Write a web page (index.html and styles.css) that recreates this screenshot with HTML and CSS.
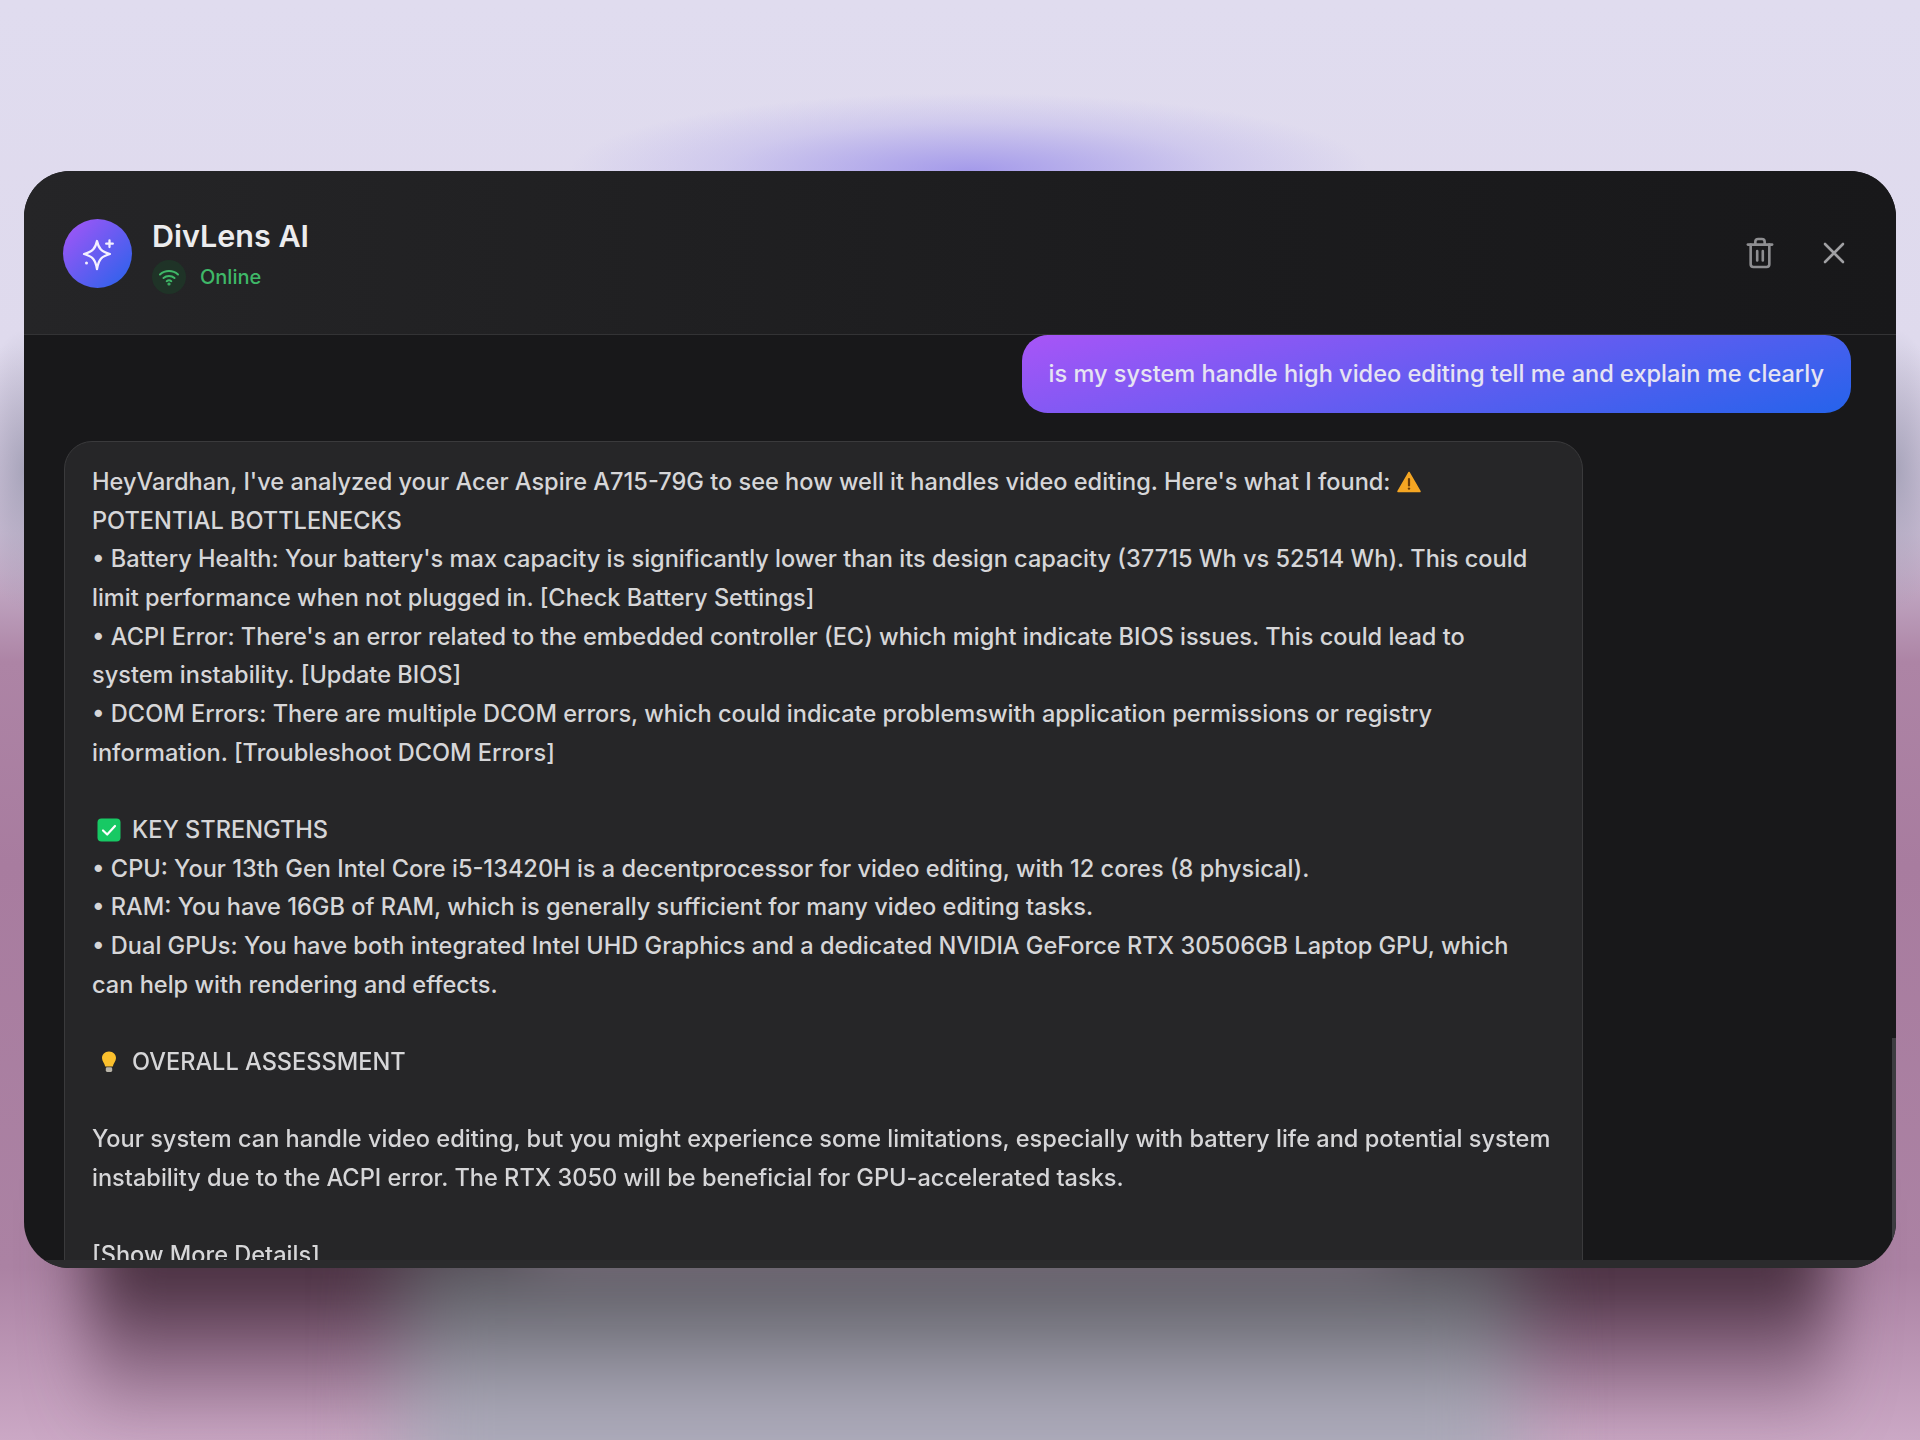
FILE: index.html
```html
<!DOCTYPE html>
<html>
  <head>
    <meta http-equiv="Content-Type" content="text/html;charset=utf-8" />
    <title>DivLens AI</title>
    <link rel="stylesheet" href="styles.css">
  </head>
  <body>
    <div class="backdrop">
      <div class="glow"></div>
      <div class="side-shade side-left"></div>
      <div class="side-shade side-right"></div>
      <div class="under-shade"></div>
    </div>
    <div class="panel">
      <div class="header">
        <div class="brand">
          <div class="avatar">
            <svg viewBox="0 0 36 36" width="36" height="36" fill="none" stroke="#f4f0ff" stroke-width="2.3" stroke-linejoin="round" stroke-linecap="round">
              <path d="M17 5C18.6 12.5 21.5 15.7 30 18C21.5 20.3 18.6 23.5 17 33C15.4 23.5 12.5 20.3 4 18C12.5 15.7 15.4 12.5 17 5z"/>
              <path d="M29.5 4.5v6.5M26.2 7.7h6.6"/>
              <circle cx="6.5" cy="27" r="1.5" fill="#f4f0ff" stroke="none"/>
            </svg>
          </div>
          <div class="brand-text">
            <div class="brand-name">DivLens AI</div>
            <div class="status">
              <span class="status-icon">
                <svg viewBox="0 0 24 24" width="24" height="24" fill="none" stroke="#3fb868" stroke-width="2" stroke-linecap="round">
                  <path d="M3 9.5c5-4.6 13-4.6 18 0"/>
                  <path d="M6.5 13c3-2.7 8-2.7 11 0"/>
                  <path d="M9.7 16.2c1.3-1.1 3.3-1.1 4.6 0"/>
                  <circle cx="12" cy="19" r="0.6" fill="#3fb868"/>
                </svg>
              </span>
              <span>Online</span>
            </div>
          </div>
        </div>
        <div class="actions">
          <svg viewBox="0 0 30 34" width="28" height="32" fill="none" stroke="#8e8e91" stroke-width="2.8" stroke-linecap="round" stroke-linejoin="round">
            <path d="M2 8h26"/>
            <path d="M10 8V5C10 3 11 2 13 2h4C19 2 20 3 20 5V8"/>
            <path d="M5 8v21c0 2 1 3 3 3h14c2 0 3-1 3-3V8"/>
            <path d="M12 15v10M18 15v10"/>
          </svg>
          <svg viewBox="0 0 24 24" width="24" height="24" fill="none" stroke="#a0a0a3" stroke-width="2.6" stroke-linecap="round">
            <path d="M3 3l18 18M21 3L3 21"/>
          </svg>
        </div>
      </div>

      <div class="messages">
        <div class="bubble">is my system handle high video editing tell me and explain me clearly</div>
        <div class="reply">
          <div>HeyVardhan, I've analyzed your Acer Aspire A715-79G to see how well it handles video editing. Here's what I found:
            <svg class="emoji" viewBox="0 0 24 24" width="24" height="24"><path d="M12 2.5L23 21.5H1z" fill="#f5a623" stroke="#f5a623" stroke-width="1.5" stroke-linejoin="round"/><path d="M12 9v6.5" stroke="#6b3d08" stroke-width="2.2" stroke-linecap="round"/><circle cx="12" cy="18.6" r="1.2" fill="#6b3d08"/></svg>
          </div>
          <div>POTENTIAL BOTTLENECKS</div>
          <div>• Battery Health: Your battery's max capacity is significantly lower than its design capacity (37715 Wh vs 52514 Wh). This could<br>limit performance when not plugged in. [Check Battery Settings]</div>
          <div>• ACPI Error: There's an error related to the embedded controller (EC) which might indicate BIOS issues. This could lead to<br>system instability. [Update BIOS]</div>
          <div>• DCOM Errors: There are multiple DCOM errors, which could indicate problemswith application permissions or registry<br>information. [Troubleshoot DCOM Errors]</div>
          <div class="blank"></div>
          <div class="heading">
            <svg class="emoji" viewBox="0 0 24 24" width="24" height="24"><rect x="0.5" y="0.5" width="23" height="23" rx="4" fill="#17c964"/><path d="M6 12.5l4.2 4L18 8" fill="none" stroke="#fff" stroke-width="2.2" stroke-linecap="round" stroke-linejoin="round"/></svg>
            KEY STRENGTHS
          </div>
          <div>• CPU: Your 13th Gen Intel Core i5-13420H is a decentprocessor for video editing, with 12 cores (8 physical).</div>
          <div>• RAM: You have 16GB of RAM, which is generally sufficient for many video editing tasks.</div>
          <div>• Dual GPUs: You have both integrated Intel UHD Graphics and a dedicated NVIDIA GeForce RTX 30506GB Laptop GPU, which<br>can help with rendering and effects.</div>
          <div class="blank"></div>
          <div class="heading">
            <svg class="emoji" viewBox="0 0 24 24" width="24" height="24"><path d="M12 1.5c-4.3 0-7 3-7 6.6 0 3.4 2.6 5 3.2 8.4h7.6c.6-3.4 3.2-5 3.2-8.4 0-3.6-2.7-6.6-7-6.6z" fill="#fbc02d"/><rect x="8.8" y="17.3" width="6.4" height="4.6" rx="1.4" fill="#b9b4a8"/></svg>
            OVERALL ASSESSMENT
          </div>
          <div class="blank"></div>
          <div>Your system can handle video editing, but you might experience some limitations, especially with battery life and potential system<br>instability due to the ACPI error. The RTX 3050 will be beneficial for GPU-accelerated tasks.</div>
          <div class="blank"></div>
          <div>[Show More Details]</div>
        </div>
      </div>
      <div class="scroll-thumb"></div>
      <div class="footer-edge"></div>
    </div>
  </body>
</html>
```

FILE: styles.css
```css
html,
body {
  height: 100%;
}

body {
  margin: 0;
  height: 1440px;
  overflow: hidden;
  font-family: Inter, "Noto Sans", sans-serif;
  background:
    radial-gradient(ellipse 50px 140px at 24px 470px, rgba(150, 150, 172, 0.7), rgba(150, 150, 172, 0) 100%),
    radial-gradient(ellipse 50px 140px at 1896px 470px, rgba(150, 150, 172, 0.7), rgba(150, 150, 172, 0) 100%),
    linear-gradient(180deg, #e0dcef 0%, #dfdaed 24%, #cdbed6 37%, #ad84a5 46%, #a87c9f 60%, #ab82a3 88%, #cba8c5 100%);
}

/* holds the blurred lights so they can't grow the page */
.backdrop {
  position: absolute;
  top: 0;
  left: 0;
  width: 1920px;
  height: 1440px;
  overflow: hidden;
}

/* purple light coming out from behind the top of the panel */
.glow {
  position: absolute;
  left: 570px;
  top: 93px;
  width: 800px;
  height: 156px;
  background: radial-gradient(ellipse 50% 50% at center, #a49aea 0%, rgba(164, 154, 234, 0.65) 30%, rgba(164, 154, 234, 0.28) 62%, rgba(164, 154, 234, 0) 100%);
}

/* dark mauve shadow under the left and right parts of the panel */
.side-shade {
  position: absolute;
  top: 1200px;
  width: 440px;
  height: 230px;
  background: linear-gradient(180deg, #472e3e 0%, #472e3e 32%, rgba(90, 60, 82, 0.55) 62%, rgba(120, 90, 112, 0) 100%);
  filter: blur(32px);
}

.side-left {
  left: 90px;
}

.side-right {
  left: 1390px;
}

/* grey column below the panel, dark at the top and fading out to the bottom */
.under-shade {
  position: absolute;
  left: 400px;
  top: 1230px;
  width: 1120px;
  height: 300px;
  background: linear-gradient(180deg, #54545a 0%, #56565c 13%, #aeacbc 62%);
  filter: blur(40px);
}

.panel {
  position: relative;
  display: flex;
  flex-direction: column;
  width: 1872px;
  height: 1097px;
  margin: 171px 24px 0;
  border-radius: 46px;
  overflow: hidden;
  background: #18181a;
  color: #d6d6d8;
  filter: blur(0.6px);
}

.header {
  display: flex;
  flex: none;
  align-items: center;
  justify-content: space-between;
  height: 163px;
  padding: 0 50px 0 39px;
  background: linear-gradient(90deg, #252527 0%, #1c1c1e 60%, #18181a 100%);
  border-bottom: 1px solid #333335;
}

.brand {
  display: flex;
  align-items: center;
  gap: 20px;
}

.avatar {
  display: flex;
  align-items: center;
  justify-content: center;
  width: 69px;
  height: 69px;
  margin-top: 2px;
  border-radius: 50%;
  background: linear-gradient(135deg, #a855f7, #2563eb);
}

.brand-name {
  font-size: 30.5px;
  font-weight: 600;
  line-height: 36px;
  margin-top: 7px;
  color: #ececee;
}

.status {
  display: flex;
  align-items: center;
  gap: 14px;
  margin-top: 5.5px;
  font-size: 20px;
  font-weight: 500;
  color: #3fb868;
}

.status-icon {
  display: flex;
  align-items: center;
  justify-content: center;
  width: 34px;
  height: 34px;
  border-radius: 50%;
  background: #1f3327;
}

.actions {
  display: flex;
  align-items: center;
  gap: 48px;
}

.messages {
  display: flex;
  flex: 1;
  flex-direction: column;
  min-height: 0;
  overflow: hidden;
  padding: 0 45px 0 40px;
}

.bubble {
  align-self: flex-end;
  flex: none;
  padding: 19px 27px 20px 27px;
  border-radius: 26px;
  font-size: 23.57px;
  font-weight: 500;
  line-height: 39px;
  color: #e6e4f2;
  background: linear-gradient(165deg, #a855f7 0%, #2563eb 100%);
}

.reply {
  flex: none;
  width: 1519px;
  margin-top: 28px;
  padding: 21px 15px 21px 27px;
  box-sizing: border-box;
  background: #262628;
  border: 1px solid #3a3a3c;
  border-radius: 28px;
  font-size: 23.57px;
  font-weight: 500;
  line-height: 38.65px;
}

.blank {
  height: 38.65px;
}

.heading {
  display: flex;
  align-items: center;
  gap: 11px;
  padding-left: 5px;
}

.emoji {
  vertical-align: -4px;
}

.scroll-thumb {
  position: absolute;
  right: 0;
  top: 867px;
  width: 4px;
  height: 217px;
  background: #3c3c40;
}

.footer-edge {
  flex: none;
  height: 8px;
  background: #2b2b2d;
}
```
